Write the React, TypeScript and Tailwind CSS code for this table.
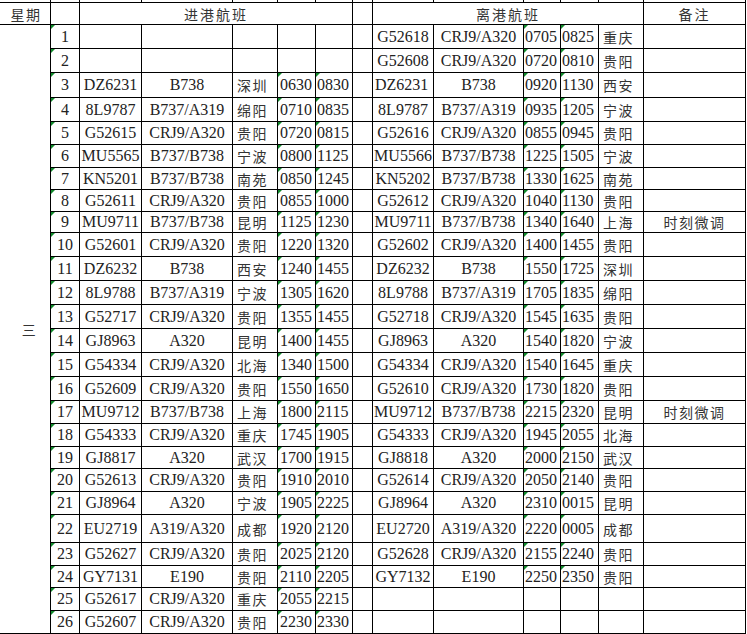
import clsx from "clsx";

type Row = [string, string, string, string, string, string, string, string, string, string, string];

const rows: Row[] = [
  ["", "", "", "", "", "G52618", "CRJ9/A320", "0705", "0825", "重庆", ""],
  ["", "", "", "", "", "G52608", "CRJ9/A320", "0720", "0810", "贵阳", ""],
  ["DZ6231", "B738", "深圳", "0630", "0830", "DZ6231", "B738", "0920", "1130", "西安", ""],
  ["8L9787", "B737/A319", "绵阳", "0710", "0835", "8L9787", "B737/A319", "0935", "1205", "宁波", ""],
  ["G52615", "CRJ9/A320", "贵阳", "0720", "0815", "G52616", "CRJ9/A320", "0855", "0945", "贵阳", ""],
  ["MU5565", "B737/B738", "宁波", "0800", "1125", "MU5566", "B737/B738", "1225", "1505", "宁波", ""],
  ["KN5201", "B737/B738", "南苑", "0850", "1245", "KN5202", "B737/B738", "1330", "1625", "南苑", ""],
  ["G52611", "CRJ9/A320", "贵阳", "0855", "1000", "G52612", "CRJ9/A320", "1040", "1130", "贵阳", ""],
  ["MU9711", "B737/B738", "昆明", "1125", "1230", "MU9711", "B737/B738", "1340", "1640", "上海", "时刻微调"],
  ["G52601", "CRJ9/A320", "贵阳", "1220", "1320", "G52602", "CRJ9/A320", "1400", "1455", "贵阳", ""],
  ["DZ6232", "B738", "西安", "1240", "1455", "DZ6232", "B738", "1550", "1725", "深圳", ""],
  ["8L9788", "B737/A319", "宁波", "1305", "1620", "8L9788", "B737/A319", "1705", "1835", "绵阳", ""],
  ["G52717", "CRJ9/A320", "贵阳", "1355", "1455", "G52718", "CRJ9/A320", "1545", "1635", "贵阳", ""],
  ["GJ8963", "A320", "昆明", "1400", "1455", "GJ8963", "A320", "1540", "1820", "宁波", ""],
  ["G54334", "CRJ9/A320", "北海", "1340", "1500", "G54334", "CRJ9/A320", "1540", "1645", "重庆", ""],
  ["G52609", "CRJ9/A320", "贵阳", "1550", "1650", "G52610", "CRJ9/A320", "1730", "1820", "贵阳", ""],
  ["MU9712", "B737/B738", "上海", "1800", "2115", "MU9712", "B737/B738", "2215", "2320", "昆明", "时刻微调"],
  ["G54333", "CRJ9/A320", "重庆", "1745", "1905", "G54333", "CRJ9/A320", "1945", "2055", "北海", ""],
  ["GJ8817", "A320", "武汉", "1700", "1915", "GJ8818", "A320", "2000", "2150", "武汉", ""],
  ["G52613", "CRJ9/A320", "贵阳", "1910", "2010", "G52614", "CRJ9/A320", "2050", "2140", "贵阳", ""],
  ["GJ8964", "A320", "宁波", "1905", "2225", "GJ8964", "A320", "2310", "0015", "昆明", ""],
  ["EU2719", "A319/A320", "成都", "1920", "2120", "EU2720", "A319/A320", "2220", "0005", "成都", ""],
  ["G52627", "CRJ9/A320", "贵阳", "2025", "2120", "G52628", "CRJ9/A320", "2155", "2240", "贵阳", ""],
  ["GY7131", "E190", "贵阳", "2110", "2205", "GY7132", "E190", "2250", "2350", "贵阳", ""],
  ["G52617", "CRJ9/A320", "重庆", "2055", "2215", "", "", "", "", "", ""],
  ["G52607", "CRJ9/A320", "贵阳", "2230", "2330", "", "", "", "", "", ""],
];

// excel's little green "number stored as text" flag
function Flag() {
  return (
    <span className="absolute left-0 top-0 h-0 w-0 border-t-[4px] border-r-[4px] border-t-[#118a2c] border-r-transparent" />
  );
}

function Cell({
  children,
  className,
  flag,
  cjk,
}: {
  children?: React.ReactNode;
  className?: string;
  flag?: boolean;
  cjk?: boolean;
}) {
  return (
    <div
      className={clsx(
        "relative flex items-center overflow-visible whitespace-nowrap border-r border-b border-black leading-none",
        cjk ? "font-['Noto_Sans_CJK_SC',sans-serif] text-[14px] tracking-[1.5px] text-[#333]" : "text-[16px] text-[#222]",
        className
      )}
    >
      {flag && <Flag />}
      {children}
    </div>
  );
}

const cols = Array.from({ length: 14 });

export default function App() {
  return (
    <div className="h-[634px] w-[747px] overflow-hidden bg-white font-['Liberation_Serif','Noto_Sans_CJK_SC',serif]">
      <div className="grid grid-cols-[51px_29px_62px_91px_45px_38px_37px_20px_61px_90px_37px_38px_45px_102px] grid-rows-[3px_22px_24px_24px_25px_24px_23px_23px_22px_22px_21px_24px_24px_24px_24px_24px_24px_24px_23px_23px_22px_23px_23px_28px_23px_22px_23px_23px]">
        {/* sliver of the row above the header */}
        {cols.map((_, i) => (
          <div key={i} className="border-r border-b border-black" />
        ))}

        {/* header */}
        <Cell cjk className="justify-center pl-[2px]">星期</Cell>
        <Cell />
        <Cell cjk className="col-span-5 justify-center tracking-[2px]">进港航班</Cell>
        <Cell />
        <Cell cjk className="col-span-5 justify-center tracking-[2px]">离港航班</Cell>
        <Cell cjk className="justify-center tracking-[2px]">备注</Cell>

        <Cell cjk className="row-span-26 justify-center pl-[9px]">三</Cell>

        {rows.map((r, i) => {
          const n = i + 1;
          const hasIn = r[3] !== "";
          const hasOut = r[7] !== "";
          return [
            <Cell key={`${n}a`} flag className="justify-center">{n}</Cell>,
            <Cell key={`${n}b`} className="justify-center">{r[0]}</Cell>,
            <Cell key={`${n}c`} className="justify-center">{r[1]}</Cell>,
            <Cell key={`${n}d`} cjk className="pl-[4px]">{r[2]}</Cell>,
            <Cell key={`${n}e`} flag={hasIn} className="pl-[2px]">{r[3]}</Cell>,
            <Cell key={`${n}f`} flag={hasIn} className="pl-[1px]">{r[4]}</Cell>,
            <Cell key={`${n}g`} />,
            <Cell key={`${n}h`} className={n === 3 ? "pl-[2px]" : "justify-center"}>{r[5]}</Cell>,
            <Cell key={`${n}i`} className="justify-center">{r[6]}</Cell>,
            <Cell key={`${n}j`} flag={hasOut} className="pl-[1px]">{r[7]}</Cell>,
            <Cell key={`${n}k`} flag={hasOut} className="pl-[1px]">{r[8]}</Cell>,
            <Cell key={`${n}l`} cjk className="pl-[4px]">{r[9]}</Cell>,
            <Cell key={`${n}m`} cjk className="justify-center">{r[10]}</Cell>,
          ];
        })}
      </div>
    </div>
  );
}
